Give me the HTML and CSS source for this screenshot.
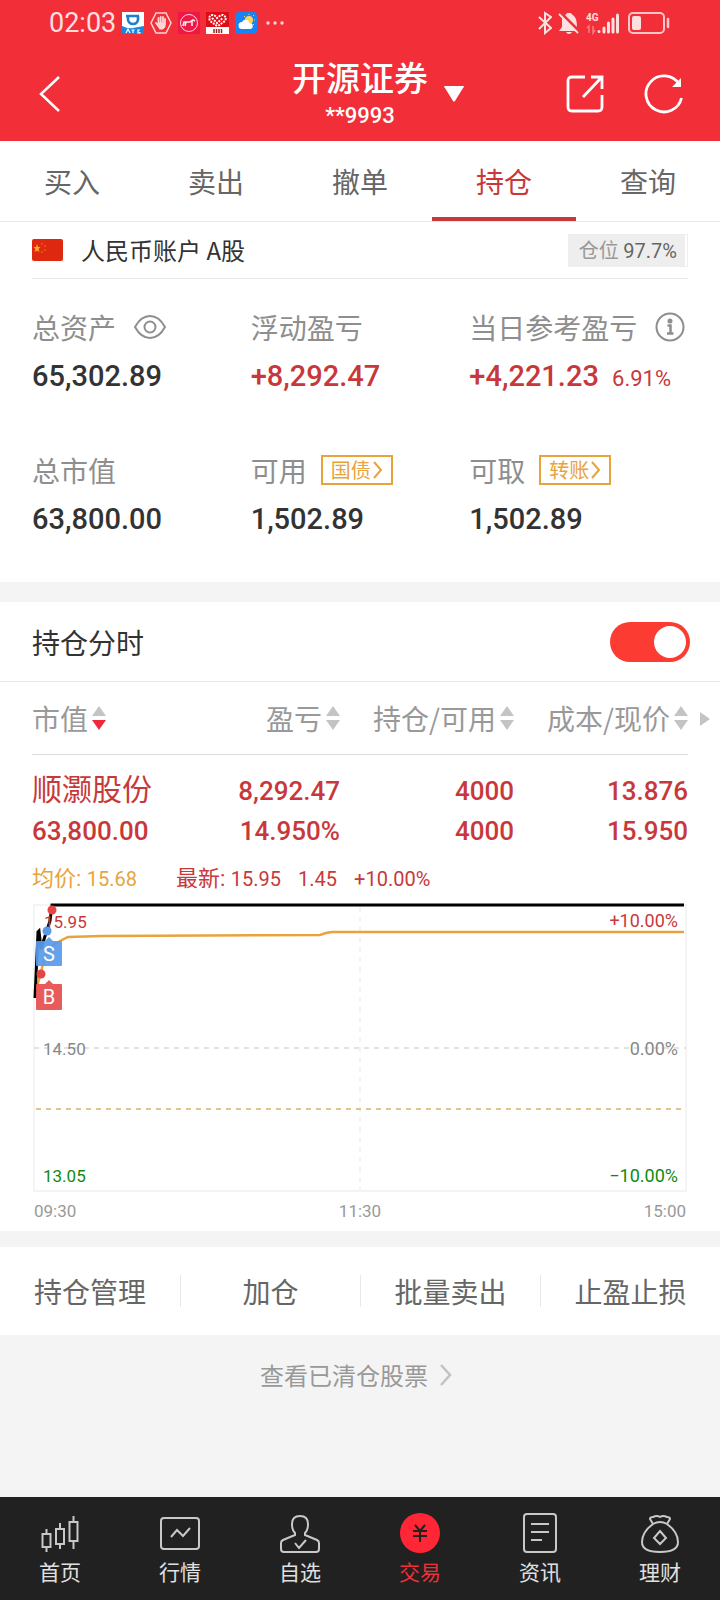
FILE: index.html
```html
<!DOCTYPE html>
<html lang="zh-CN">
  <head>
    <meta charset="UTF-8" />
    <meta name="viewport" content="width=device-width, initial-scale=1.0" />
    <title>持仓</title>
    <link rel="stylesheet" href="styles.css">
  </head>
  <body>
    <header class="header">
      <div class="statusbar">
        <div class="status-left">
          <span class="clock">02:03</span>
          <svg width="22" height="22" viewBox="0 0 22 22">
            <path fill="#fff" d="M0 0h22v22H0z" />
            <path fill="#1787e0" d="M0 14q6 3 11 2t11-2v8H0z" />
            <path fill="none" stroke="#1d7fd0" stroke-width="2.6" d="M4 4h13M6 4v4q1 4 5 4t5-4V4" />
            <path fill="none" stroke="#fff" stroke-width="1.2" d="M4 21l2-4 2 4M9.500 18h3M11 18v3M18 18h-2v3h2v-1" />
          </svg>
          <svg width="22" height="22" viewBox="0 0 22 22" fill="none" stroke="#ffd5d7">
            <path stroke-width="1.5" d="M6 1h10l5 10-5 10H6L1 11z" />
            <path stroke-width="1.8" stroke-linecap="round" d="M8.500 12V6M10.700 11V5M13 11V5M15 12V7M6 11l3 4" />
            <path fill="#ffd5d7" d="M8.500 11H15v4l-2 2H9.500z" />
          </svg>
          <svg width="22" height="22" viewBox="0 0 22 22">
            <path fill="#ed1848" d="M0 0h22v22H0z" />
            <circle cx="11" cy="11" r="8.500" fill="none" stroke="#ffd5d7" />
            <path fill="none" stroke="#ffe3e6" stroke-width="1.600" d="M5 14l1-4h6l3-2 2 1M8 10l-1 4M14 9v5" />
          </svg>
          <svg width="23" height="22" viewBox="0 0 23 22">
            <path fill="#dc0d14" d="M0 0h23v15H0z" />
            <path fill="#fff" d="M0 15h23v7H0z" />
            <path fill="none" stroke="#fff" stroke-width="2" stroke-dasharray="2 1" d="M11 14L4 9q-2-5 2-6 3 0 5 3 3-3 6-3 4 2 2 6l-7 5M6 6l5 5 6-5" />
            <path stroke="#a02020" stroke-width="1.500" d="M8 17v4M10.500 17v4M13 17v4M15.500 17v4" />
          </svg>
          <svg width="22" height="22" viewBox="0 0 22 22">
            <rect width="22" height="22" rx="4" fill="#1684f5" />
            <circle cx="14" cy="8" r="4" fill="#ffd35b" />
            <path stroke="#ffd35b" d="M14 2v1M18 4l1-1M19 8h1M18 12l1 1M9 4l1 1" />
            <path fill="#fff" d="M7 17a3.500 3.500 0 0 1 0-7 4 4 0 0 1 7.500 1A3 3 0 0 1 15 17z" />
          </svg>
          <svg class="dots" width="18" height="4" viewBox="0 0 18 4" fill="#ffd5d7">
            <circle cx="2" cy="2" r="1.700" /><circle cx="9" cy="2" r="1.700" /><circle cx="16" cy="2" r="1.700" />
          </svg>
        </div>
        <div class="status-right">
          <svg width="14" height="24" viewBox="0 0 14 24" fill="none" stroke="#ffe0e1" stroke-width="2">
            <path d="M1 6l12 11-6 5V2l6 4L1 18" />
          </svg>
          <svg width="22" height="24" viewBox="0 0 22 24">
            <path fill="#ffe0e1" d="M4 6l14 14H1l3-4zM7 4q2-1 2-2h4q0 1 3 3 3 3 3 11zM8 21h6q-1 2-3 2t-3-2z" />
            <path stroke="#ffe0e1" stroke-width="1.800" d="M1 3l19 19" />
          </svg>
          <svg width="34" height="24" viewBox="0 0 34 24">
            <text class="network" x="0" y="10">4G</text>
            <path fill="none" stroke="#fa7c81" stroke-width="1.500" d="M1 17l2-2v7M7 15v7l2-3" />
            <path stroke="#ffe0e1" stroke-width="3" stroke-linecap="round" d="M13 20.500v0M18 17v4M22.500 12v9M27 8v13M31.500 4v17" />
          </svg>
          <svg class="battery" width="42" height="24" viewBox="0 0 42 24">
            <rect x="1" y="2" width="35" height="20" rx="4" fill="none" stroke="#ffc5c8" stroke-width="2" />
            <rect x="4" y="5" width="9" height="14" rx="2" fill="#ffe0e1" />
            <path stroke="#ffc5c8" stroke-width="2.500" stroke-linecap="round" d="M40 8v8" />
          </svg>
        </div>
      </div>
      <div class="titlebar">
        <button class="icon-btn" aria-label="返回">
          <svg width="24" height="38" viewBox="0 0 24 38" fill="none" stroke="#fff" stroke-width="2.500">
            <path d="M23 2L5 19l18 17" />
          </svg>
        </button>
        <button class="broker">
          <span class="broker-text">
            <span class="broker-name">开源证券</span>
            <span class="broker-id">**9993</span>
          </span>
          <svg width="20" height="16" viewBox="0 0 20 16"><path fill="#fff" d="M1 0h18q2 0 0 2l-8 13q-1 1-2 0L1 2Q-1 0 1 0z" /></svg>
        </button>
        <div class="title-actions">
          <button class="icon-btn" aria-label="分享">
            <svg width="38" height="38" viewBox="0 0 38 38" fill="none" stroke="#fff" stroke-width="2.800">
              <path d="M19 2H6Q2 2 2 6v26q0 4 4 4h26q4 0 4-4V20M17 22L35 3M25 2h11v12" />
            </svg>
          </button>
          <button class="icon-btn" aria-label="刷新">
            <svg width="40" height="40" viewBox="0 0 40 40">
              <path fill="none" stroke="#fff" stroke-width="2.800" d="M37.500 24A18 18 0 1 1 35 10" />
              <path fill="#fff" d="M37 4v9h-9z" />
            </svg>
          </button>
        </div>
      </div>
    </header>

    <nav class="tabs">
      <a class="tab" href="#">买入</a>
      <a class="tab" href="#">卖出</a>
      <a class="tab" href="#">撤单</a>
      <a class="tab active" href="#">持仓</a>
      <a class="tab" href="#">查询</a>
    </nav>

    <main class="main">
      <section class="account">
        <div class="account-head">
          <svg width="31" height="22" viewBox="0 0 31 22">
            <rect width="31" height="22" rx="2" fill="#de2910" />
            <path fill="#ffb020" d="M5 5l1 3h2.500l-2 2 1 3L5 11.500 2.500 13l1-3-2-2H4z" />
            <g fill="#e08a18"><circle cx="10" cy="5" r=".8" /><circle cx="13" cy="7" r=".8" /><circle cx="13" cy="11" r=".8" /><circle cx="10" cy="13" r=".8" /></g>
          </svg>
          <span class="account-name">人民币账户 A股</span>
          <span class="ratio">仓位 <b>97.7%</b></span>
        </div>
        <dl class="metrics">
          <div class="metric">
            <dt>总资产
              <button class="icon-btn" aria-label="隐藏金额">
                <svg width="32" height="24" viewBox="0 0 32 24" fill="none" stroke="#8e8e8e" stroke-width="2">
                  <path d="M1 12Q7 1 16 1t15 11q-6 11-15 11T1 12z" /><circle cx="16" cy="12" r="5.500" />
                </svg>
              </button>
            </dt>
            <dd>65,302.89</dd>
          </div>
          <div class="metric">
            <dt>浮动盈亏</dt>
            <dd class="up">+8,292.47</dd>
          </div>
          <div class="metric">
            <dt>当日参考盈亏
              <button class="icon-btn" aria-label="说明">
                <svg width="30" height="30" viewBox="0 0 30 30" fill="none" stroke="#8e8e8e" stroke-width="2">
                  <circle cx="15" cy="15" r="13.500" /><circle cx="15" cy="9" r="1.500" fill="#8e8e8e" />
                  <path stroke-width="2.500" d="M12.500 13.500H15.500V21M12 21.500h6.500" />
                </svg>
              </button>
            </dt>
            <dd class="up">+4,221.23 <small>6.91%</small></dd>
          </div>
          <div class="metric">
            <dt>总市值</dt>
            <dd>63,800.00</dd>
          </div>
          <div class="metric">
            <dt class="with-tag">可用
              <button class="tag">国债<svg width="10" height="18" viewBox="0 0 10 18"><path d="M1 1l7 8-7 8" /></svg></button>
            </dt>
            <dd>1,502.89</dd>
          </div>
          <div class="metric">
            <dt class="with-tag">可取
              <button class="tag">转账<svg width="10" height="18" viewBox="0 0 10 18"><path d="M1 1l7 8-7 8" /></svg></button>
            </dt>
            <dd>1,502.89</dd>
          </div>
        </dl>
      </section>

      <section class="holdings">
        <div class="switch-row">
          <label for="minute">持仓分时</label>
          <input class="switch" type="checkbox" id="minute" checked />
        </div>
        <div class="table-wrap">
          <table class="table">
            <thead>
              <tr>
                <th><button class="sort desc">市值<svg width="14" height="24" viewBox="0 0 14 24"><path d="M7 0l7 10H0z" /><path class="down" d="M0 14h14L7 24z" /></svg></button></th>
                <th><button class="sort">盈亏<svg width="14" height="24" viewBox="0 0 14 24"><path d="M7 0l7 10H0z" /><path class="down" d="M0 14h14L7 24z" /></svg></button></th>
                <th><button class="sort">持仓/可用<svg width="14" height="24" viewBox="0 0 14 24"><path d="M7 0l7 10H0z" /><path class="down" d="M0 14h14L7 24z" /></svg></button></th>
                <th><button class="sort">成本/现价<svg width="14" height="24" viewBox="0 0 14 24"><path d="M7 0l7 10H0z" /><path class="down" d="M0 14h14L7 24z" /></svg></button></th>
              </tr>
            </thead>
            <tbody>
              <tr>
                <td><span class="stock-name">顺灏股份</span><br />63,800.00</td>
                <td>8,292.47<br />14.950%</td>
                <td>4000<br />4000</td>
                <td>13.876<br />15.950</td>
              </tr>
            </tbody>
          </table>
          <svg class="more" width="10" height="14" viewBox="0 0 10 14"><path fill="#c4c4c4" d="M0 0l10 7-10 7z" /></svg>
        </div>

        <div class="chart">
          <p class="quote">
            <span class="avg">均价: <b>15.68</b></span>
            <span>最新: <b>15.95</b></span>
            <b>1.45</b>
            <b>+10.00%</b>
          </p>
          <svg class="plot" viewBox="0 0 656 294">
            <!-- frame and grid -->
            <rect x="2" y="4" width="652" height="286" fill="none" stroke="#f4f4f4" stroke-width="2" />
            <path stroke="#f2f2f2" stroke-width="2" stroke-dasharray="5 5" d="M328 6v284" />
            <path stroke="#e2e2e2" stroke-width="2" stroke-dasharray="5 5" d="M2 147h652" />
            <path stroke="#d3b46c" stroke-width="1.500" stroke-dasharray="5 5" d="M4 208h646" />
            <!-- average and price lines -->
            <path fill="none" stroke="#e8a33d" stroke-width="2.500" d="M4 90L8 75 13 55 20 45 28 40 36 36 70 35 288 34 294 32 300 31H652" />
            <path fill="none" stroke="#000" stroke-width="3" d="M3 97L6 31l1-1 2 18 5-16 4-12 2-16h632" />
            <text class="up price" x="12" y="27">15.95</text>
            <text class="up end" x="646" y="26">+10.00%</text>
            <text class="price" x="11" y="154">14.50</text>
            <text class="end" x="646" y="154">0.00%</text>
            <text class="fall price" x="11" y="281">13.05</text>
            <text class="fall end" x="646" y="281">−10.00%</text>
            <!-- trade marks -->
            <circle cx="20" cy="9" r="4.500" fill="#e64545" />
            <circle cx="15" cy="30" r="4.500" fill="#5a97e6" />
            <circle cx="9" cy="73" r="4.500" fill="#e64545" />
            <path fill="#5a9aea" fill-opacity=".93" d="M5 40h8l4-4 4 4h8q1 0 1 1v23q0 1-1 1H5q-1 0-1-1V41q0-1 1-1z" />
            <path fill="#e85252" fill-opacity=".95" d="M5 83h8l4-4 4 4h8q1 0 1 1v24q0 1-1 1H5q-1 0-1-1V84q0-1 1-1z" />
            <text class="mark" x="17" y="60">S</text>
            <text class="mark" x="17" y="103">B</text>
          </svg>
          <div class="axis"><span>09:30</span><span>11:30</span><span>15:00</span></div>
        </div>
      </section>

      <div class="actions">
        <button class="action">持仓管理</button>
        <button class="action">加仓</button>
        <button class="action">批量卖出</button>
        <button class="action">止盈止损</button>
      </div>

      <a class="history" href="#">查看已清仓股票
        <svg width="12" height="22" viewBox="0 0 12 22" fill="none" stroke="#c2c2c2" stroke-width="2.500"><path d="M1 1l9 10-9 10" /></svg>
      </a>
    </main>

    <nav class="tabbar">
      <a class="bar-item" href="#">
        <svg width="40" height="40" viewBox="0 0 40 40">
          <path d="M6.500 16v5M6.500 34v5M20 10v6M20 31v5M33.500 3v6M33.500 28v8M2.500 21h8v13h-8zM16 16h8v15h-8zM29.500 9h8v19h-8z" />
        </svg>
        首页
      </a>
      <a class="bar-item" href="#">
        <svg width="40" height="40" viewBox="0 0 40 40">
          <rect x="1" y="5" width="38" height="31" rx="3" /><path d="M11 24l6-7 6 6 7-8" />
        </svg>
        行情
      </a>
      <a class="bar-item" href="#">
        <svg width="40" height="40" viewBox="0 0 40 40">
          <path d="M15 22v-2q-3-3-3-9 0-8 8-8t8 8q0 6-3 9v2l12 5q2 1 2 3v6q0 3-3 3H4q-3 0-3-3v-6q0-2 2-3zM15 30l4 5 7-8" />
        </svg>
        自选
      </a>
      <a class="bar-item current" href="#">
        <svg width="40" height="40" viewBox="0 0 40 40">
          <circle cx="20" cy="20" r="20" /><path d="M15 12l5 6 5-6M13 18h14M13 23h14M20 18v11" />
        </svg>
        交易
      </a>
      <a class="bar-item" href="#">
        <svg width="40" height="40" viewBox="0 0 40 40">
          <rect x="4" y="1" width="32" height="38" rx="3" /><path d="M11 11h18M11 19h18M11 27h11" />
        </svg>
        资讯
      </a>
      <a class="bar-item" href="#">
        <svg width="40" height="40" viewBox="0 0 40 40">
          <path d="M13 11l-3-5q0-2 3-2 4-2 7 0 3-2 7 0 3 0 3 2l-3 5q11 8 11 18 0 10-18 10T2 29q0-10 11-18zM13 11q7-4 14 0M20 18l6 7-6 6-6-6z" />
        </svg>
        理财
      </a>
    </nav>
  </body>
</html>
```
FILE: styles.css
```css
* {
  margin: 0;
  padding: 0;
  box-sizing: border-box;
}
body {
  min-height: 100vh;
  display: flex;
  flex-direction: column;
  background-color: #f4f4f4;
  color: #333;
  font-family: "Noto Sans CJK SC", sans-serif;
  font-size: 28px;
  line-height: 40px;
}
button {
  border: none;
  background: none;
  font: inherit;
  color: inherit;
}
a {
  color: inherit;
  text-decoration: none;
}
svg {
  display: block;
  flex-shrink: 0;
}
b {
  font-weight: 400;
}
.header,
.ratio b,
.metric dd,
.table td,
.chart,
.tabbar {
  font-family: Roboto, "Noto Sans CJK SC", sans-serif;
}
.up {
  color: #c8383a;
}

/* header */
.header {
  background-color: #f22f38;
  color: white;
}
.statusbar {
  display: flex;
  justify-content: space-between;
  align-items: center;
  height: 46px;
  padding: 0 50px 0 49px;
}
.status-left,
.status-right {
  display: flex;
  align-items: center;
  gap: 6px;
}
.clock {
  font-size: 27px;
  color: #ffdfe0;
}
.dots {
  margin-left: 3px;
}
.battery {
  margin-left: 2px;
}
.network {
  fill: #ffe0e1;
  font-size: 10px;
  font-weight: 700;
}
.titlebar {
  display: grid;
  grid-template-columns: 1fr auto 1fr;
  align-items: center;
  height: 95px;
  padding: 0 36px;
}
.icon-btn {
  display: block;
}
.broker {
  display: flex;
  align-items: center;
  gap: 16px;
  padding-left: 36px;
}
.broker-text {
  display: flex;
  flex-direction: column;
}
.broker-name {
  font-size: 34px;
  font-weight: 500;
  line-height: 44px;
}
.broker-id {
  font-size: 22px;
  font-weight: 500;
  line-height: 30px;
}
.title-actions {
  display: flex;
  justify-content: flex-end;
  align-items: center;
  gap: 40px;
}

/* top tabs */
.tabs {
  display: grid;
  grid-template-columns: repeat(5, 1fr);
  background-color: white;
  border-bottom: 1px solid #e8e8e8;
}
.tab {
  height: 80px;
  line-height: 80px;
  text-align: center;
  color: #666;
}
.tab.active {
  color: #c8383a;
  border-bottom: 4px solid #c8383a;
}

/* account */
.main {
  flex: 1;
}
.account {
  background-color: white;
  padding: 0 32px;
}
.account-head {
  display: flex;
  align-items: center;
  height: 57px;
  border-bottom: 1px solid #e8e8e8;
  font-size: 24px;
}
.account-name {
  margin-left: 18px;
}
.ratio {
  margin-left: auto;
  padding: 0 10px;
  border: 1px solid #eee;
  box-shadow: inset -2px 0 white;
  background-color: #eee;
  color: #999;
  font-size: 20px;
  line-height: 30px;
}
.ratio b {
  color: #666;
}
.metrics {
  display: grid;
  grid-template-columns: repeat(3, 1fr);
  row-gap: 54px;
  padding: 28px 0 43px;
}
.metric {
  white-space: nowrap;
}
.metric dt {
  display: flex;
  align-items: center;
  gap: 18px;
  height: 40px;
  color: #8e8e8e;
}
.metric .with-tag {
  gap: 14px;
}
.metric dd {
  height: 40px;
  margin-top: 9px;
  font-size: 29px;
  font-weight: 500;
}
.metric small {
  margin-left: 6px;
  font-size: 22px;
  font-weight: 400;
}
.tag {
  display: flex;
  align-items: center;
  gap: 2px;
  padding: 0 8px;
  border: 2px solid #e8a33d;
  color: #e8a33d;
  font-size: 20px;
  line-height: 26px;
}
.tag path {
  fill: none;
  stroke: #e8a33d;
  stroke-width: 2px;
}

/* holdings */
.holdings {
  margin-top: 20px;
  background-color: white;
}
.switch-row {
  display: flex;
  justify-content: space-between;
  align-items: center;
  height: 80px;
  padding: 0 30px 0 32px;
  border-bottom: 1px solid #e8e8e8;
}
.switch {
  appearance: none;
  display: flex;
  justify-content: flex-end;
  width: 80px;
  height: 40px;
  padding: 4px;
  border-radius: 20px;
  background-color: #fc3b32;
}
.switch::before {
  content: "";
  width: 32px;
  height: 32px;
  border-radius: 50%;
  background-color: white;
}
.switch:not(:checked) {
  justify-content: flex-start;
  background-color: #ccc;
}
.table-wrap {
  position: relative;
  padding: 0 32px;
}
.table {
  width: 100%;
  table-layout: fixed;
  border-collapse: collapse;
}
.table th {
  height: 72px;
  border-bottom: 1px solid #dcdcdc;
  color: #999;
  font-weight: 400;
}
.table th:first-child {
  width: 134px;
}
.sort {
  display: flex;
  align-items: center;
  gap: 4px;
  margin-left: auto;
  white-space: nowrap;
}
.table th:first-child .sort {
  margin-left: 0;
}
.sort path {
  fill: #c4c4c4;
}
.sort.desc .down {
  fill: #f0283c;
}
.table td {
  padding-top: 16px;
  text-align: right;
  vertical-align: top;
  color: #c8383a;
  font-size: 26px;
  font-weight: 500;
  white-space: nowrap;
}
.table td:first-child {
  text-align: left;
}
.stock-name {
  font-size: 30px;
  line-height: 38px;
  font-weight: 400;
}
.more {
  position: absolute;
  right: 10px;
  top: 30px;
}

/* chart */
.chart {
  padding: 8px 32px;
}
.quote {
  display: flex;
  align-items: center;
  gap: 17px;
  color: #c8383a;
  font-size: 22px;
}
.quote b {
  font-size: 20px;
}
.quote .avg {
  margin-right: 22px;
  color: #e8a33d;
}
.plot {
  width: 100%;
  margin-top: 2px;
}
.plot text {
  fill: #888;
  font-size: 18px;
}
.plot .price {
  font-size: 17px;
}
.plot .up {
  fill: #c8383a;
}
.plot .fall {
  fill: #118a11;
}
.plot .end {
  text-anchor: end;
}
.plot .mark {
  fill: white;
  font-size: 20px;
  text-anchor: middle;
}
.axis {
  display: flex;
  justify-content: space-between;
  margin-top: 4px;
  padding: 0 2px;
  color: #999;
  font-size: 17px;
  line-height: 24px;
}

/* actions */
.actions {
  display: grid;
  grid-template-columns: repeat(4, 1fr);
  margin-top: 16px;
  padding: 28px 0;
  background-color: white;
}
.action {
  height: 32px;
  line-height: 32px;
  color: #666;
}
.action + .action {
  border-left: 1px solid #e8e8e8;
}
.history {
  display: flex;
  justify-content: center;
  align-items: center;
  gap: 12px;
  padding: 20px 8px 0 0;
  color: #999;
  font-size: 24px;
}

/* bottom bar */
.tabbar {
  display: grid;
  grid-template-columns: repeat(6, 1fr);
  height: 103px;
  padding-top: 16px;
  background-color: #212121;
}
.bar-item {
  display: flex;
  flex-direction: column;
  align-items: center;
  gap: 4px;
  color: #e0e0e0;
  font-size: 21px;
  line-height: 32px;
}
.bar-item svg {
  fill: none;
  stroke: #c8c8c8;
  stroke-width: 2px;
}
.bar-item.current {
  color: #f22f38;
}
.bar-item.current circle {
  fill: #ff2635;
  stroke: none;
}
.bar-item.current path {
  stroke: #212121;
}
```
